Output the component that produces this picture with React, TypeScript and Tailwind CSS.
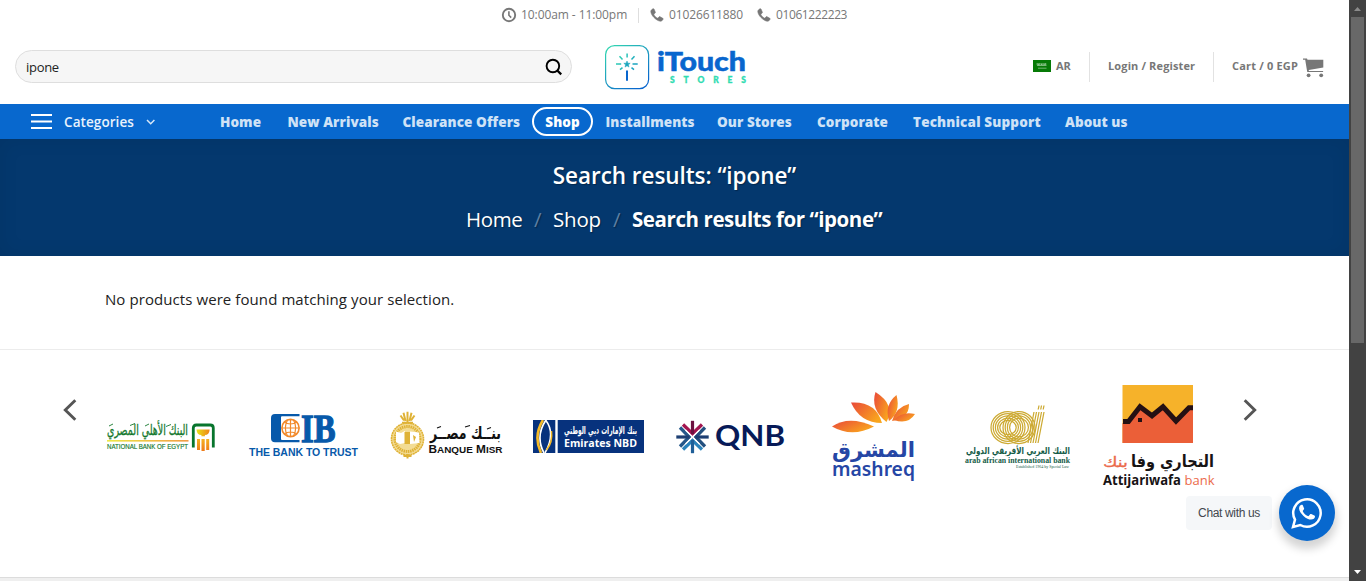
import React from "react";

function ClockIcon() {
  return (
    <svg width="16" height="16" viewBox="0 0 16 16" fill="none" stroke="#777" strokeWidth="1.9" className="-mt-px">
      <circle cx="8" cy="8" r="6.2" />
      <path d="M7.9 4.3v3.9l2.3 2.4" strokeWidth="1.6" />
    </svg>
  );
}

function PhoneIcon() {
  return (
    <svg width="14" height="14" viewBox="0 0 14 14" fill="#777" className="-mt-px">
      <path d="M3.2.8C2.2 1 .8 2.200.8 3.500c.2 2 1.200 4 3.200 6s4 3.400 6.300 3.700c1.400.1 2.600-1.200 2.800-2.100.1-.4 0-.6-.3-.8L10 8.700c-.4-.2-.7-.1-1 .2l-.9 1.100c-.2.200-.5.2-.8.100C6 9.400 4.500 7.900 3.900 6.700c-.1-.3 0-.5.200-.7l1-.9c.3-.3.4-.6.2-1L4.100 1.200C3.900.8 3.600.7 3.200.8z" stroke="#777" strokeWidth=".6" />
    </svg>
  );
}

function BrandLogo() {
  return (
    <svg width="142" height="45" viewBox="0 0 142 45" className="overflow-visible">
      <defs>
        <linearGradient id="brand" x1="0" y1="0" x2=".75" y2="1">
          <stop offset="0" stopColor="#35dcb0" />
          <stop offset="1" stopColor="#0866ce" />
        </linearGradient>
        <linearGradient id="spark" gradientUnits="userSpaceOnUse" x1="10" y1="8" x2="34" y2="24">
          <stop offset="0" stopColor="#35dcb0" />
          <stop offset="1" stopColor="#1395c4" />
        </linearGradient>
      </defs>
      <rect x=".6" y=".6" width="43" height="43" rx="9" fill="none" stroke="url(#brand)" strokeWidth="1.200" />
      <path d="M22.100 8.500v4M14.500 11.300l3 3.200M29.500 11.300l-3 3.200M11 19.100h5.200M27.500 19.100h5.200M15 24.600l2.500-2M29 24.600l-2.500-2" stroke="url(#spark)" strokeWidth="1.500" fill="none" />
      <path d="M22 16l.9 2.200 2.300.1-1.800 1.500.6 2.300-2-1.300-2 1.300.6-2.300-1.800-1.500 2.300-.1z" fill="#1ba6bd" stroke="#1ba6bd" strokeWidth=".5" />
      <path d="M22 25.500v10.300" stroke="#0866ce" strokeWidth="2" />
      <text x="52" y="26" fontFamily="Lato, sans-serif" fontWeight="900" fontSize="27" textLength="89" lengthAdjust="spacingAndGlyphs" fill="#0866ce" stroke="#0866ce" strokeWidth=".5">iTouch</text>
      <text x="65" y="37.500" fontFamily="Lato, sans-serif" fontWeight="900" fontSize="8.500" textLength="76" fill="#2fdcb1" stroke="#2fdcb1" strokeWidth=".3">STORES</text>
    </svg>
  );
}

function Flag() {
  return (
    <svg width="18" height="12" viewBox="0 0 18 12" className="-mt-[3px]">
      <rect width="18" height="12" fill="#067a06" />
      <path d="M4.200 3v2.200M5.500 3.400v2M6.800 3v2.500M8.200 3.200l.5 2M10 3v2.400M11.300 3.300v2M12.700 3v2.200M4 5.300h9.500" stroke="#a8d5a8" strokeWidth=".8" fill="none" />
      <path d="M5 8.200h8.500" stroke="#8dc78d" strokeWidth=".8" />
    </svg>
  );
}

function CartIcon() {
  return (
    <svg width="21" height="20" viewBox="0 0 21 20" fill="#777" className="mt-px">
      <path d="M0 .5h4l.5 1.300H20.300V9.500L5.800 12v1h14.300v1H4.300L3.800 11.500 2.200 1.800H0z" />
      <circle cx="5.600" cy="17.300" r="1.900" />
      <circle cx="18.200" cy="17.300" r="1.900" />
    </svg>
  );
}

function Chevron({ flip = false }: { flip?: boolean }) {
  return (
    <svg width="14" height="22" viewBox="0 0 14 22" className={flip ? "rotate-180" : ""}>
      <path d="M12.300 1.300L2.300 11l10 9.700" fill="none" stroke="#555" strokeWidth="2.900" />
    </svg>
  );
}

const arabic = "'DejaVu Sans', 'Noto Sans', sans-serif";

function NationalBank() {
  return (
    <svg width="110" height="30" viewBox="0 0 110 30" className="overflow-visible">
      <defs>
        <linearGradient id="nbe" x1="0" x2="1">
          <stop offset="0" stopColor="#e8e21a" />
          <stop offset="1" stopColor="#ef8318" />
        </linearGradient>
        <linearGradient id="pillar" x1="0" x2="0" y1="0" y2="1">
          <stop offset="0" stopColor="#f6b321" />
          <stop offset="1" stopColor="#ee7a19" />
        </linearGradient>
      </defs>
      <text x="1" y="12" fontFamily={arabic} fontSize="15" textLength="81" lengthAdjust="spacingAndGlyphs" direction="rtl" textAnchor="end" fill="#14782e" stroke="#14782e" strokeWidth=".3">البنك الأهلي المصري</text>
      <path d="M3 3l4-2M24 2.500l5-2M39 3l4-2M60 3.500l5-2" stroke="#14782e" strokeWidth=".9" />
      <rect x="1" y="17.200" width="81.500" height="1.300" fill="url(#nbe)" />
      <text x="1" y="25.700" fontFamily="Liberation Sans, sans-serif" fontSize="6.500" textLength="81" lengthAdjust="spacingAndGlyphs" fill="#14782e" stroke="#14782e" strokeWidth=".15">NATIONAL BANK OF EGYPT</text>
      <path d="M87.300 24.500V5q0-3 3-3h14q3 0 3 3v19.500" fill="none" stroke="#08752d" strokeWidth="2.800" />
      <path d="M90.500 6.500h13.200q-.5 5.500-4.800 5.500v1.200h-3.500V12q-4.500 0-4.900-5.500z" fill="url(#nbe)" />
      <path d="M91 16h3v11h-3zM95.500 16h3.200v12h-3.200zM100.200 16h3v11h-3z" fill="url(#pillar)" />
    </svg>
  );
}

function Cib() {
  return (
    <svg width="110" height="46" viewBox="0 0 110 46" className="overflow-visible">
      <path d="M26 1h24.500v2.300H33q-1 0-1 1V26q0 1 1 1h17.500v2.300H26q-4 0-4-4V5q0-4 4-4z" fill="#0759aa" />
      <circle cx="41.500" cy="15" r="8.600" fill="#fff" stroke="#f28a2b" strokeWidth="1.600" />
      <path d="M41.500 6v18M32.600 15h17.800M35 9q6.500 4 13 0M35 21q6.500-4 13 0M38.500 7q-4.300 8 0 16M44.500 7q4.300 8 0 16" fill="none" stroke="#f28a2b" strokeWidth="1.200" />
      <text x="52" y="28.700" fontFamily="Liberation Serif, serif" fontWeight="700" fontSize="41" textLength="34.500" lengthAdjust="spacingAndGlyphs" fill="#0759aa" stroke="#0759aa" strokeWidth="1.300">IB</text>
      <text x="0" y="42.500" fontFamily="Liberation Sans, sans-serif" fontWeight="700" fontSize="10.500" textLength="109" lengthAdjust="spacing" fill="#0759aa">THE BANK TO TRUST</text>
    </svg>
  );
}

function BanqueMisr() {
  return (
    <svg width="113" height="48" viewBox="0 0 113 48" className="overflow-visible">
      <circle cx="17.500" cy="28" r="16" fill="#f3dc94" stroke="#dfb236" strokeWidth="1.600" strokeDasharray="2 .5" />
      <circle cx="17.500" cy="28" r="12.500" fill="none" stroke="#dfb236" strokeWidth="3" strokeDasharray="1.500 .7" />
      <path d="M17.500 11V.8M15.500 10L13.500 1.800M19.500 10l2-8.200M14 9.500l-3.500-5M21 9.500l3.500-5M12 11.700h11M13.500 45h8M17.500 43v4.500" stroke="#dfb236" strokeWidth="2" />
      <path d="M6 20.500l5 1.500 4-2v12l-5 1-4-2zM20 20.500l9 1 .5 10.500-9.500 1z" fill="#fff" />
      <path d="M14.500 21h5.500v12h-5.500zM23 24l3 2-2 5" fill="#dfb236" />
      <text x="40" y="28" fontFamily={arabic} fontWeight="700" fontSize="17" textLength="71" lengthAdjust="spacingAndGlyphs" direction="rtl" textAnchor="end" fill="#111">بنــك مصــر</text>
      <path d="M47 17l4-1.500M75 16l5-1.500M97 18l4-1.500" stroke="#111" strokeWidth="1.100" />
      <text x="38.500" y="41.500" fontFamily="Liberation Sans, sans-serif" fontWeight="700" fontSize="10.500" textLength="74" lengthAdjust="spacingAndGlyphs" fill="#111">B<tspan fontSize="8.800">ANQUE</tspan> M<tspan fontSize="8.800">ISR</tspan></text>
    </svg>
  );
}

function EmiratesNbd() {
  return (
    <svg width="111" height="33" viewBox="0 0 111 33">
      <rect width="111" height="33" fill="#07327d" />
      <path d="M23.500 0v33" stroke="#fff" strokeWidth="2.400" />
      <path d="M13 0Q2 16 11 33" fill="none" stroke="#fff" strokeWidth="1.700" />
      <path d="M10 0Q0 16 8 33" fill="none" stroke="#f4ba28" strokeWidth="2.600" />
      <path d="M12.500 0Q23 13 12 33" fill="none" stroke="#fff" strokeWidth="1.600" />
      <path d="M18.500 11Q20 22 13.500 30" fill="none" stroke="#f4ba28" strokeWidth="1.500" />
      <text x="31" y="14" fontFamily={arabic} fontWeight="700" fontSize="11" textLength="73" lengthAdjust="spacingAndGlyphs" direction="rtl" textAnchor="end" fill="#fff">بنك الإمارات دبي الوطني</text>
      <text x="31" y="27" fontFamily="Open Sans, sans-serif" fontWeight="700" fontSize="11" textLength="73" lengthAdjust="spacingAndGlyphs" fill="#fff">Emirates NBD</text>
    </svg>
  );
}

const qnbBranches = [
  { angle: 0, stem: "#6d1240", wing: "#a3164f" },
  { angle: 90, stem: "#1d3f73", wing: "#24507f" },
  { angle: 180, stem: "#1f5f98", wing: "#2b83bb" },
  { angle: 270, stem: "#1d3f73", wing: "#26588a" },
];

function Qnb() {
  return (
    <svg width="110" height="34" viewBox="0 0 110 34" className="overflow-visible">
      <g transform="translate(16.500 17)" fill="none">
        {qnbBranches.map((branch) => (
          <g key={branch.angle} transform={`rotate(${branch.angle})`}>
            <path d="M-9.500-12.500L0-3.200l9.500-9.300" stroke={branch.wing} strokeWidth="3.300" />
            <path d="M0-16.200V-3" stroke={branch.stem} strokeWidth="3.200" />
          </g>
        ))}
        <path d="M-7-7L7 7M7-7L-7 7" stroke="#fff" strokeWidth="1.300" />
      </g>
      <text x="39" y="26" fontFamily="Lato, sans-serif" fontWeight="700" fontSize="29" textLength="70" lengthAdjust="spacingAndGlyphs" fill="#071a58">QNB</text>
    </svg>
  );
}

function Mashreq() {
  return (
    <svg width="84" height="91" viewBox="0 0 84 91" className="overflow-visible">
      <defs>
        <linearGradient id="petal" x1="0" y1="0" x2="1" y2=".6">
          <stop offset="0" stopColor="#e9483a" />
          <stop offset="1" stopColor="#f9a51e" />
        </linearGradient>
      </defs>
      <g fill="url(#petal)">
        <path d="M0 34.500Q17 23 42 34.500 20 46 0 34.500z" />
        <path d="M19 10.500Q44 9 50 31 28 31 19 10.500z" />
        <path d="M43.500 0Q64 13 54.500 30 38 17 43.500 0z" />
        <path d="M64.500 3Q69 20 57 29 52 13 64.500 3z" />
        <path d="M77 12Q77 27 60 29 64 15 77 12z" />
        <path d="M83 22Q76 33 62 28 70 19 83 22z" />
      </g>
      <text x="0" y="65" fontFamily={arabic} fontWeight="700" fontSize="21" textLength="83" lengthAdjust="spacingAndGlyphs" direction="rtl" textAnchor="end" fill="#2546a5">المشرق</text>
      <text x="0" y="84" fontFamily="Noto Sans, sans-serif" fontWeight="600" fontSize="20" textLength="83" lengthAdjust="spacingAndGlyphs" fill="#2546a5">mashreq</text>
    </svg>
  );
}

function ArabAfrican() {
  return (
    <svg width="106" height="64" viewBox="0 0 106 64" className="overflow-visible">
      <g fill="none" stroke="#cdaa32" strokeWidth="1.250">
        {[17, 14.800, 12.600, 10.400, 8.200].map((r) => (
          <ellipse key={r} cx="43" cy="22.500" rx={r} ry={r - 1} />
        ))}
        {[16, 13.800, 11.600, 9.400].map((r) => (
          <ellipse key={r} cx="54" cy="22.500" rx={r} ry={r} />
        ))}
        <path d="M69 7l-6 31M71.500 7l-6 31M74 7l-6 31M76.500 7l-6 31M79 7l-6 31M74 .5l-.8 4M76.500.5l-.8 4M79 .5l-.8 4" />
      </g>
      <text x="1" y="48.500" fontFamily={arabic} fontWeight="700" fontSize="9.500" textLength="104" lengthAdjust="spacingAndGlyphs" direction="rtl" textAnchor="end" fill="#155c48">البنك العربي الأفريقي الدولي</text>
      <text x="0" y="58" fontFamily="Liberation Serif, serif" fontWeight="700" fontSize="8" textLength="105" lengthAdjust="spacingAndGlyphs" fill="#155c48">arab african international bank</text>
      <text x="51" y="62.500" fontFamily="Liberation Serif, serif" fontSize="4" textLength="53" lengthAdjust="spacingAndGlyphs" fill="#155c48">Established 1964 by Special Law</text>
    </svg>
  );
}

function Attijariwafa() {
  return (
    <svg width="112" height="105" viewBox="0 0 112 105" className="overflow-visible">
      <rect x="19.500" width="70.500" height="58" fill="#f6b22a" />
      <path d="M19.500 38H25l12-15 11.500 10L60 22l13 15 13.500-15H90v36H19.500z" fill="#eb5f38" />
      <path d="M20 36.500h5.500L37 21.800l12 9 11-9 13 14.200 13-13.300h4" fill="none" stroke="#241013" strokeWidth="5" />
      <rect x="35" y="33" width="4" height="4" fill="#241013" />
      <text x="28" y="82" fontFamily={arabic} fontWeight="700" fontSize="16.500" textLength="83" lengthAdjust="spacingAndGlyphs" direction="rtl" textAnchor="end" fill="#171314">التجاري وفا</text>
      <text x="0" y="82" fontFamily={arabic} fontSize="14" textLength="25" lengthAdjust="spacingAndGlyphs" direction="rtl" textAnchor="end" fill="#eb6a4b" stroke="#eb6a4b" strokeWidth=".3">بنك</text>
      <text x="0" y="100" fontFamily="Open Sans, sans-serif" fontWeight="700" fontSize="13.500" textLength="78" lengthAdjust="spacingAndGlyphs" fill="#171314">Attijariwafa</text>
      <text x="81.500" y="100" fontFamily="Open Sans, sans-serif" fontSize="13.500" textLength="30" lengthAdjust="spacingAndGlyphs" fill="#eb6a4b">bank</text>
    </svg>
  );
}

function TopBar() {
  return (
    <div className="flex h-[30px] items-center text-[12px] leading-none text-[#777]">
      <div className="ml-[501px] flex w-[137px] shrink-0 items-center gap-1">
        <ClockIcon />
        <span className="whitespace-nowrap tracking-[-0.08px]">10:00am - 11:00pm</span>
      </div>
      <i className="h-[15px] w-px bg-[#dedede]" />
      <div className="ml-[11px] flex w-[107px] items-center gap-[5px]">
        <PhoneIcon />
        <span className="tracking-[-0.13px]">01026611880</span>
      </div>
      <div className="flex items-center gap-[5px]">
        <PhoneIcon />
        <span className="tracking-[-0.4px]">01061222223</span>
      </div>
    </div>
  );
}

function Header() {
  return (
    <div className="flex h-[74px] items-start">
      <div className="mt-5 ml-[15px] flex h-[33px] w-[557px] items-center justify-between rounded-full border border-[#dedede] bg-[#f6f6f6] pr-2 pl-[10px]">
        <span className="mt-[2px] text-[13px] tracking-[-0.3px] text-[#222]">ipone</span>
        <svg width="18" height="18" viewBox="0 0 18 18" fill="none" stroke="#000" strokeWidth="1.900">
          <circle cx="7.900" cy="8" r="6.300" />
          <path d="M12.300 12.500l3.900 3.900" strokeWidth="2.300" />
        </svg>
      </div>
      <div className="mt-[15px] ml-[33px] w-[142px]">
        <BrandLogo />
      </div>
      <div className="mt-[22px] ml-[286px] flex h-[30px] items-center text-[11px] font-bold whitespace-nowrap text-[#777]">
        <div className="flex w-[56px] items-center gap-[5px]">
          <Flag />
          <span className="-mt-[2px] tracking-[-0.1px]">AR</span>
        </div>
        <div className="flex h-[30px] w-[124px] items-center border-l border-[#e2e2e2] pb-[2px] pl-[18px] tracking-[0.13px]">Login / Register</div>
        <div className="flex h-[30px] items-center border-l border-[#e2e2e2] pl-[18px]">
          <span className="w-[71px] pb-[2px] tracking-[0.18px]">Cart / 0 EGP</span>
          <CartIcon />
        </div>
      </div>
    </div>
  );
}

function Nav() {
  return (
    <nav className="flex h-[35px] items-center bg-[#0868ce] text-[13.500px] font-extrabold tracking-[0.08px] whitespace-nowrap text-[#cfe2f6]">
      <svg width="21" height="15" viewBox="0 0 21 15" className="ml-[31px] -mt-px">
        <path d="M0 1h21M0 7.500h21M0 14h21" stroke="#fff" strokeWidth="1.900" />
      </svg>
      <span className="ml-3 w-[82px] pt-px font-semibold text-[#e9f2fc]">Categories</span>
      <svg width="10" height="7" viewBox="0 0 10 7" className="mt-[2px] mr-[64px]">
        <path d="M1 1l3.700 3.700L8.400 1" fill="none" stroke="#d8e8f8" strokeWidth="1.500" />
      </svg>
      <a className="w-[67.500px] pt-px">Home</a>
      <a className="w-[115px] pt-px">New Arrivals</a>
      <a className="w-[129.500px] pt-px">Clearance Offers</a>
      <a className="mr-[12.500px] flex h-[29px] w-[61px] items-center justify-center rounded-full border-2 border-white pt-px text-white">Shop</a>
      <a className="w-[111.500px] pt-px">Installments</a>
      <a className="w-[100px] pt-px">Our Stores</a>
      <a className="w-[96px] pt-px">Corporate</a>
      <a className="w-[152px] pt-px tracking-[0.17px]">Technical Support</a>
      <a className="pt-px">About us</a>
    </nav>
  );
}

function Hero() {
  return (
    <div className="flex h-[117px] flex-col items-center bg-[#04386e] pt-[22px] whitespace-nowrap text-white shadow-[inset_0_0_20px_rgba(0,0,0,0.07)]">
      <h1 className="text-[22.500px] leading-[30px] font-semibold tracking-[-0.05px] [text-shadow:1px_1px_1px_rgba(0,0,0,0.3)]">Search results: “ipone”</h1>
      <div className="mt-[13px] flex h-[30px] items-center text-[20.500px] [text-shadow:1px_1px_1px_rgba(0,0,0,0.3)]">
        <span className="w-[68px] tracking-[-0.4px]">Home</span>
        <span className="w-[19px] text-[#5d7fa3]">/</span>
        <span className="w-[60px] tracking-[-0.2px]">Shop</span>
        <span className="w-[19px] text-[#5d7fa3]">/</span>
        <span className="w-[251px] font-bold tracking-[-0.42px]">Search results for “ipone”</span>
      </div>
    </div>
  );
}

function Banks() {
  return (
    <section className="flex h-[228px] items-start border-t border-[#ececec]">
      <div className="mt-[49px] ml-[63px] w-[43px]"><Chevron /></div>
      <div className="mt-[73px] w-[143px]"><NationalBank /></div>
      <div className="mt-[63px] w-[141px]"><Cib /></div>
      <div className="mt-[61px] w-[143px]"><BanqueMisr /></div>
      <div className="mt-[70px] w-[143px]"><EmiratesNbd /></div>
      <div className="mt-[70px] w-[156px]"><Qnb /></div>
      <div className="mt-[42px] w-[133px]"><Mashreq /></div>
      <div className="mt-[55px] w-[138px]"><ArabAfrican /></div>
      <div className="mt-[35px] w-[140px]"><Attijariwafa /></div>
      <div className="mt-[49px]"><Chevron flip /></div>
    </section>
  );
}

function ChatWidget() {
  return (
    <div className="absolute top-[485px] left-[1186px] flex items-center gap-[7px]">
      <div className="flex h-[34px] w-[86px] items-center justify-center rounded bg-[#f5f7f9] font-['Liberation_Sans',sans-serif] text-[12px] tracking-[-0.35px] text-[#43474e]">Chat with us</div>
      <div className="flex size-14 items-center justify-center rounded-full bg-[#0868ce] shadow-[0_6px_8px_2px_rgba(0,0,0,0.17)]">
        <svg width="32" height="32" viewBox="0 0 32 32">
          <path d="M2 30l2-7.300A13.700 13.700 0 1 1 9.300 28z" fill="none" stroke="#fff" strokeWidth="2.500" />
          <path d="M10.900 8.500c-.4-.7-.8-.7-1.200-.7-1 0-2.600 1.300-2.600 3.700 0 2.500 1.900 5 4.400 7.400 2.800 2.600 5.400 3.700 7.500 3.700 2.300 0 4-1.500 4-3.100 0-.5-.1-.8-.6-1l-3.200-1.500c-.5-.2-.8-.1-1.100.3l-1.200 1.500c-.3.400-.7.400-1.100.2-2.200-1-3.800-2.400-4.900-4.500-.2-.4-.1-.7.1-1l1-1.200c.2-.300.2-.6.1-.9z" fill="#fff" transform="translate(1 0)" />
        </svg>
      </div>
    </div>
  );
}

function Scrollbar() {
  return (
    <div className="flex h-[581px] w-[17px] flex-col items-center justify-between bg-[#424242]">
      <div className="flex flex-col items-center">
        <svg width="17" height="17" viewBox="0 0 17 17"><path d="M5 11h7L8.500 7z" fill="#8b8b8b" /></svg>
        <div className="h-[326px] w-[13px] bg-[#686868]" />
      </div>
      <svg width="17" height="17" viewBox="0 0 17 17"><path d="M5 6h7l-3.500 4z" fill="#fff" /></svg>
    </div>
  );
}

export default function App() {
  return (
    <div className="relative flex h-[581px] w-[1366px] overflow-hidden bg-white font-['Open_Sans','Noto_Sans',sans-serif]">
      <main className="w-[1349px] shrink-0">
        <TopBar />
        <Header />
        <Nav />
        <Hero />
        <p className="h-[93px] pt-[31px] pl-[105px] text-[15px] leading-6 tracking-[0.08px] text-[#222]">No products were found matching your selection.</p>
        <Banks />
        <div className="h-[4px] border-t border-[#dcdcdc] bg-[#efefef]" />
      </main>
      <Scrollbar />
      <ChatWidget />
    </div>
  );
}
